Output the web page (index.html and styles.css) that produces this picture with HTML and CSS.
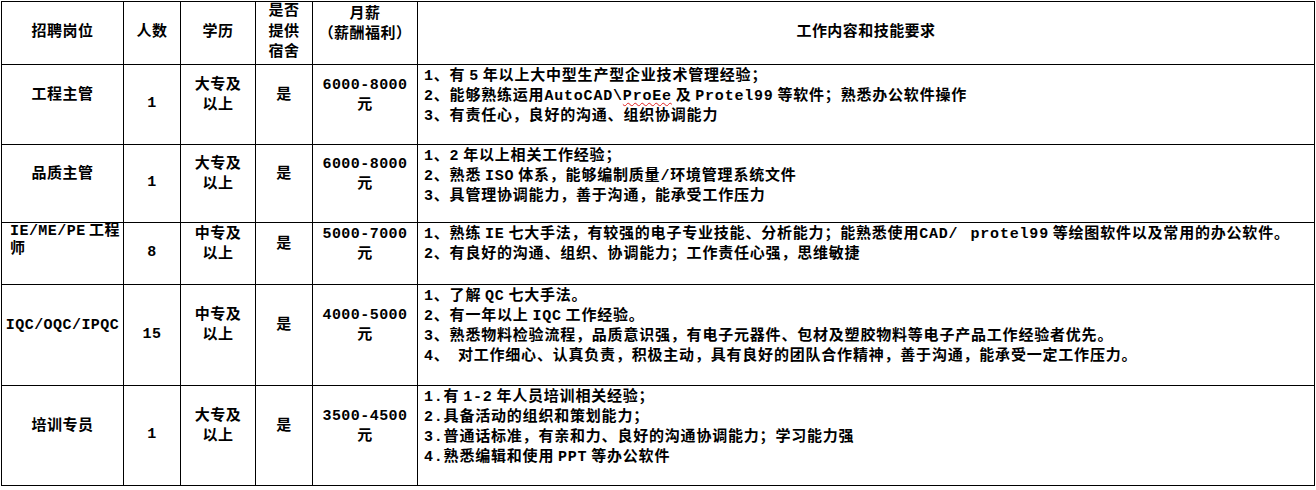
FILE: index.html
```html
<!DOCTYPE html>
<html lang="zh-CN">
<head>
<meta charset="utf-8">
<title>招聘岗位</title>
<link rel="stylesheet" href="styles.css">
</head>
<body>
<table class="jobs">
  <colgroup>
    <col class="c-post">
    <col class="c-num">
    <col class="c-edu">
    <col class="c-dorm">
    <col class="c-pay">
    <col class="c-desc">
  </colgroup>
  <tr class="r-head">
    <td class="mid">招聘岗位</td>
    <td class="mid">人数</td>
    <td class="mid">学历</td>
    <td class="mid tight">是否<br>提供<br>宿舍</td>
    <td class="top-pay">月薪<br>（薪酬福利）</td>
    <td class="mid">工作内容和技能要求</td>
  </tr>
  <tr class="r-1">
    <td class="lift">工程主管</td>
    <td class="mid">1</td>
    <td class="lift">大专及<br>以上</td>
    <td class="lift">是</td>
    <td class="lift">6000-8000<br>元</td>
    <td class="desc">1、有 5 年以上大中型生产型企业技术管理经验；<br>2、能够熟练运用AutoCAD\<span class="spell">ProEe</span> 及 Protel99 等软件；熟悉办公软件操作<br>3、有责任心，良好的沟通、组织协调能力</td>
  </tr>
  <tr class="r-2">
    <td class="lift">品质主管</td>
    <td class="mid">1</td>
    <td class="lift">大专及<br>以上</td>
    <td class="lift">是</td>
    <td class="lift">6000-8000<br>元</td>
    <td class="desc">1、2 年以上相关工作经验；<br>2、熟悉 ISO 体系，能够编制质量/环境管理系统文件<br>3、具管理协调能力，善于沟通，能承受工作压力</td>
  </tr>
  <tr class="r-3">
    <td class="post-left">IE/ME/PE 工程<br>师</td>
    <td class="mid">8</td>
    <td class="lift">中专及<br>以上</td>
    <td class="lift">是</td>
    <td class="lift">5000-7000<br>元</td>
    <td class="desc">1、熟练 IE 七大手法，有较强的电子专业技能、分析能力；能熟悉使用CAD/&ensp; protel99 等绘图软件以及常用的办公软件。<br>2、有良好的沟通、组织、协调能力；工作责任心强，思维敏捷</td>
  </tr>
  <tr class="r-4">
    <td class="lift">IQC/OQC/IPQC</td>
    <td class="mid">15</td>
    <td class="lift">中专及<br>以上</td>
    <td class="lift">是</td>
    <td class="lift">4000-5000<br>元</td>
    <td class="desc">1、了解 QC 七大手法。<br>2、有一年以上 IQC 工作经验。<br>3、熟悉物料检验流程，品质意识强，有电子元器件、包材及塑胶物料等电子产品工作经验者优先。<br>4、&ensp;对工作细心、认真负责，积极主动，具有良好的团队合作精神，善于沟通，能承受一定工作压力。</td>
  </tr>
  <tr class="r-5">
    <td class="lift">培训专员</td>
    <td class="mid">1</td>
    <td class="lift">大专及<br>以上</td>
    <td class="lift">是</td>
    <td class="lift">3500-4500<br>元</td>
    <td class="desc">1.有 1-2 年人员培训相关经验；<br>2.具备活动的组织和策划能力；<br>3.普通话标准，有亲和力、良好的沟通协调能力；学习能力强<br>4.熟悉编辑和使用 PPT 等办公软件</td>
  </tr>
</table>
</body>
</html>
```

FILE: styles.css
```css
html, body {
  margin: 0;
  padding: 0;
  background: #ffffff;
}

.jobs {
  border-collapse: collapse;
  table-layout: fixed;
  width: 1314px;
  margin: 1px 0 0 1px;
  font-family: "Liberation Mono", "Noto Sans CJK SC", monospace;
  font-size: 15px;
  line-height: 20px;
  font-weight: bold;
  letter-spacing: 0.45px;
  word-spacing: -6px;
  color: #000000;
}

.c-post { width: 122px; }
.c-num { width: 57px; }
.c-edu { width: 75px; }
.c-dorm { width: 57px; }
.c-pay { width: 105px; }
.c-desc { width: 897px; }

.jobs td {
  border: 1px solid #000000;
  padding: 0 3px;
  text-align: center;
  vertical-align: middle;
  white-space: nowrap;
}

.r-head { height: 60px; }
.r-1 { height: 80px; }
.r-2 { height: 78px; }
.r-3 { height: 62px; }
.r-4 { height: 101px; }
.r-5 { height: 100px; }

.jobs td.mid {
  vertical-align: middle;
}

.jobs td.tight {
  line-height: 20.5px;
}

.jobs td.top-pay {
  vertical-align: top;
  padding-top: 3px;
}

.jobs td.lift {
  vertical-align: middle;
  padding-bottom: 17px;
}

.jobs td.post-left {
  text-align: left;
  vertical-align: top;
  line-height: 18px;
  padding: 0 0 0 8px;
}

.jobs td.desc {
  text-align: left;
  vertical-align: top;
  padding: 2px 6px 0 6px;
  letter-spacing: 0.8px;
}

.spell {
  text-decoration: underline wavy #e02020;
  text-decoration-thickness: 1px;
  text-underline-offset: 2px;
}
```
